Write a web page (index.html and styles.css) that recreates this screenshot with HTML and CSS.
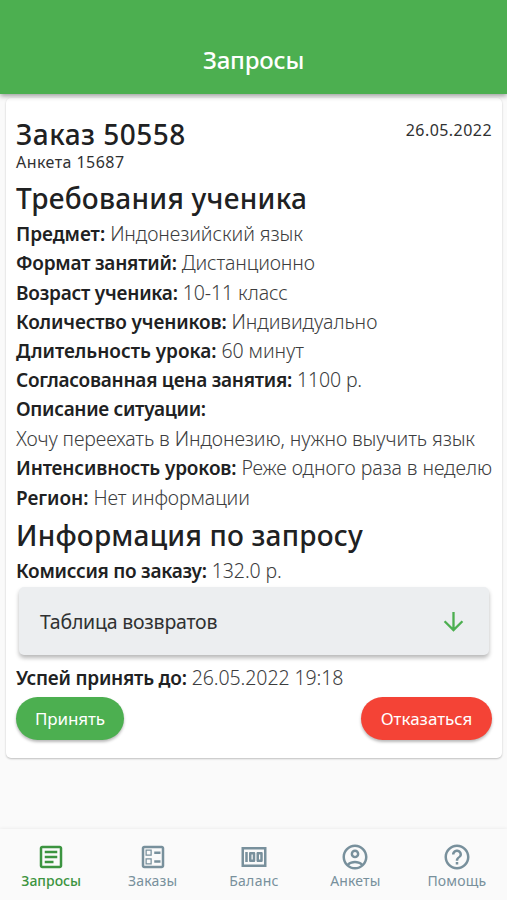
FILE: index.html
```
<!DOCTYPE html>
<html lang="ru">
<head>
<meta charset="utf-8">
<title>Запросы</title>
<link rel="stylesheet" href="styles.css">
</head>
<body>
<div class="app">
  <header class="bar"><h1>Запросы</h1></header>
  <main class="content">
    <article class="card">
      <div class="order">
        <div>
          <h2 class="order-title">Заказ 50558</h2>
          <p class="small">Анкета 15687</p>
        </div>
        <time class="small date">26.05.2022</time>
      </div>
      <h2 class="section">Требования ученика</h2>
      <p class="row"><b class="s0">Предмет:</b><span>Индонезийский язык</span></p>
      <p class="row"><b class="s2">Формат занятий:</b><span class="v1">Дистанционно</span></p>
      <p class="row"><b class="s2">Возраст ученика:</b><span>10-11 класс</span></p>
      <p class="row"><b class="s1">Количество учеников:</b><span class="v0">Индивидуально</span></p>
      <p class="row"><b class="s0">Длительность урока:</b><span class="v0">60 минут</span></p>
      <p class="row"><b class="s3">Согласованная цена занятия:</b><span class="v1">1100 р.</span></p>
      <p class="row"><b class="s4">Описание ситуации:</b></p>
      <p class="row"><span>Хочу переехать в Индонезию, нужно выучить язык</span></p>
      <p class="row"><b class="s1">Интенсивность уроков:</b><span>Реже одного раза в неделю</span></p>
      <p class="row"><b class="s0">Регион:</b><span>Нет информации</span></p>
      <h2 class="section info">Информация по запросу</h2>
      <p class="row"><b class="s3">Комиссия по заказу:</b><span>132.0 р.</span></p>
      <div class="expander">
        <span>Таблица возвратов</span>
        <svg class="arrow" viewBox="0 0 20 20"><path d="M10 1v17M1.5 9.8 10 18.2l8.500-8.400"/></svg>
      </div>
      <p class="row"><b class="s2">Успей принять до:</b><span>26.05.2022 19:18</span></p>
      <div class="actions">
        <button class="btn accept">Принять</button>
        <button class="btn decline">Отказаться</button>
      </div>
    </article>
  </main>
  <nav class="tabs">
    <a class="tab active"><svg viewBox="0 0 24 24"><path d="M19 5v14H5V5h14m0-2H5c-1.100 0-2 .9-2 2v14c0 1.100.9 2 2 2h14c1.100 0 2-.9 2-2V5c0-1.100-.9-2-2-2zM14 17H7v-2h7v2zm3-4H7v-2h10v2zm0-4H7V7h10v2z"/></svg><span>Запросы</span></a>
    <a class="tab"><svg viewBox="0 0 24 24"><path d="M13 7.500h5v2h-5zm0 7h5v2h-5zM19 3H5c-1.100 0-2 .9-2 2v14c0 1.100.9 2 2 2h14c1.100 0 2-.9 2-2V5c0-1.100-.9-2-2-2zm0 16H5V5h14v14zM11 6H6v5h5V6zm-1 4H7V7h3v3zm1 3H6v5h5v-5zm-1 4H7v-3h3v3z"/></svg><span>Заказы</span></a>
    <a class="tab"><svg viewBox="0 0 24 24"><path d="M5 8h2v8H5zm7 0H9c-.55 0-1 .45-1 1v6c0 .55.45 1 1 1h3c.55 0 1-.45 1-1V9c0-.55-.45-1-1-1zm-1 6h-1v-4h1v4zm7-6h-3c-.55 0-1 .45-1 1v6c0 .55.45 1 1 1h3c.55 0 1-.45 1-1V9c0-.55-.45-1-1-1zm-1 6h-1v-4h1v4zM2 4v16h20V4H2zm2 14V6h16v12H4z"/></svg><span class="wide">Баланс</span></a>
    <a class="tab"><svg viewBox="0 0 24 24"><path d="M12 2C6.480 2 2 6.480 2 12s4.480 10 10 10 10-4.480 10-10S17.520 2 12 2zM7.350 18.500C8.660 17.560 10.260 17 12 17s3.340.56 4.650 1.500C15.340 19.440 13.740 20 12 20s-3.340-.56-4.650-1.500zm10.790-1.380C16.450 15.800 14.320 15 12 15s-4.450.8-6.140 2.120C4.700 15.730 4 13.950 4 12c0-4.420 3.580-8 8-8s8 3.580 8 8c0 1.950-.7 3.730-1.860 5.120zM12 6c-1.930 0-3.500 1.570-3.500 3.500S10.070 13 12 13s3.500-1.570 3.500-3.500S13.930 6 12 6zm0 5c-.83 0-1.500-.67-1.500-1.500S11.170 8 12 8s1.500.67 1.500 1.500S12.830 11 12 11z"/></svg><span>Анкеты</span></a>
    <a class="tab"><svg viewBox="0 0 24 24"><path d="M11 18h2v-2h-2v2zm1-16C6.480 2 2 6.480 2 12s4.480 10 10 10 10-4.480 10-10S17.520 2 12 2zm0 18c-4.410 0-8-3.590-8-8s3.590-8 8-8 8 3.590 8 8-3.590 8-8 8zm0-14c-2.210 0-4 1.790-4 4h2c0-1.100.9-2 2-2s2 .9 2 2c0 2-3 1.750-3 5h2c0-2.250 3-2.500 3-5 0-2.210-1.790-4-4-4z"/></svg><span>Помощь</span></a>
  </nav>
</div>
</body>
</html>
```
FILE: styles.css
```
* { box-sizing: border-box; }
body, h1, h2, p { margin: 0; }
body {
  font-family: "Noto Sans", "Open Sans", sans-serif;
  color: #202122;
  background: #fafafa;
}
.app { display: flex; flex-direction: column; height: 900px; }

.bar {
  flex: none;
  height: 94px;
  padding-top: 45px;
  background: #4caf50;
  box-shadow: 0 2px 5px rgba(0, 0, 0, .38);
  text-align: center;
  z-index: 1;
}
.bar h1 {
  color: #fff;
  font-size: 24px;
  line-height: 30px;
  font-weight: 550;
  letter-spacing: -.2px;
}

.content { flex: 1; padding: 4px 5px 0 6px; }
.card {
  height: 660px;
  padding: 20px 10px 0;
  background: #fff;
  border-radius: 5px;
  box-shadow: 0 1px 2px rgba(0, 0, 0, .24);
}
.order { display: flex; justify-content: space-between; height: 60px; }
.order-title {
  font-size: 28px;
  line-height: 32px;
  font-weight: 500;
  letter-spacing: .5px;
}
.small {
  color: #303132;
  font-size: 16px;
  line-height: 20px;
  letter-spacing: .45px;
  white-space: nowrap;
}
.order p { margin-top: 2px; }
.date { margin-top: 2px; }
.section {
  height: 41px;
  font-size: 28px;
  line-height: 40px;
  font-weight: 500;
  letter-spacing: .27px;
  white-space: nowrap;
}
.info { margin-top: 3px; letter-spacing: .2px; }

.row {
  display: flex;
  align-items: baseline;
  gap: 5px;
  height: 29.3px;
  font-size: 19.5px;
  line-height: 29.3px;
  font-weight: 300;
  letter-spacing: -.08px;
  white-space: nowrap;
}
.row span { color: #3c3d3e; }
.row b { font-size: 19px; font-weight: 600; }
.s0 { letter-spacing: -.03px; }
.s1 { letter-spacing: -.15px; }
.s2 { letter-spacing: -.22px; }
.s3 { letter-spacing: -.26px; }
.s4 { letter-spacing: -.3px; }
.row .v0 { letter-spacing: -.05px; }
.row .v1 { letter-spacing: -.13px; }

.expander {
  display: flex;
  align-items: center;
  justify-content: space-between;
  height: 68px;
  margin: 2px 3px 8px;
  padding: 0 25px 0 21px;
  background: #eceef0;
  border-radius: 5px;
  box-shadow: 0 3px 4px rgba(0, 0, 0, .28);
  color: #303132;
  font-size: 19.500px;
  letter-spacing: -.22px;
}
.arrow { width: 21px; height: 21px; fill: none; stroke: #4caf50; stroke-width: 2.2; }

.actions { display: flex; justify-content: space-between; margin-top: 4.5px; }
.btn {
  height: 43px;
  border: 0;
  border-radius: 22px;
  color: #fff;
  font: 400 17px/43px "Noto Sans", sans-serif;
  box-shadow: 0 2px 3px rgba(0, 0, 0, .28);
  padding: 0;
}
.accept { width: 108px; background: #4caf50; letter-spacing: -.1px; }
.decline { width: 131px; background: #f44336; }

.tabs {
  flex: none;
  display: grid;
  grid-template-columns: repeat(5, 1fr);
  height: 71px;
  padding-top: 13px;
  box-shadow: 0 -1px 3px rgba(0, 0, 0, .05);
}
.tab {
  display: flex;
  flex-direction: column;
  align-items: center;
  padding-left: 1px;
  color: #78909c;
  font-size: 14px;
  line-height: 18px;
  font-weight: 400;
  letter-spacing: .15px;
}
.tab svg { width: 30px; height: 30px; fill: currentColor; }
.tab.active { color: #3c9440; font-weight: 500; letter-spacing: 0; }
.wide { letter-spacing: .3px; }
```
